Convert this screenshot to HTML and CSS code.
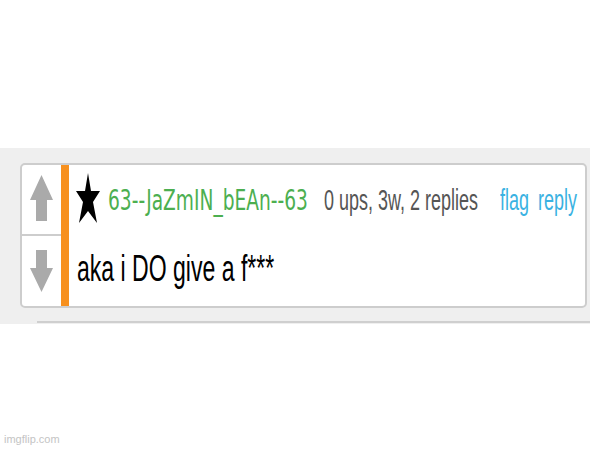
FILE: index.html
```html
<!doctype html>
<html>
<head>
<meta charset="utf-8">
<title>comment</title>
<link rel="stylesheet" href="styles.css">
</head>
<body>
<div class="band">
	<div class="comment">
		<div class="votes">
			<div class="vote vote-up">
				<svg width="23" height="46" viewBox="0 0 23 46"><polygon points="11.5,0 23,25 17,25 17,46 6,46 6,25 0,25" fill="#aaa"/></svg>
			</div>
			<div class="vote vote-down">
				<svg width="23" height="42" viewBox="0 0 23 42"><polygon points="6,0 17,0 17,18 23,18 11.5,42 0,18 6,18" fill="#aaa"/></svg>
			</div>
		</div>
		<div class="bar"></div>
		<div class="main">
			<div class="meta">
				<div class="star">
					<svg width="24" height="50" viewBox="0 0 24 50"><polygon points="12,0 15,18 24,18 17,29 21,50 12,38 3,50 7,29 0,18 9,18" fill="#000"/></svg>
				</div>
				<div class="slot slot-name"><span class="txt name">63--JaZmIN_bEAn--63</span></div>
				<div class="slot slot-stats"><span class="txt stats">0 ups, 3w, 2 replies</span></div>
				<div class="slot slot-flag"><span class="txt link">flag</span></div>
				<div class="slot"><span class="txt link">reply</span></div>
			</div>
			<div class="text">
				<span class="txt body">aka i DO give a f***</span>
			</div>
		</div>
	</div>
	<div class="next"></div>
</div>
<div class="mark">imgflip.com</div>
</body>
</html>
```

FILE: styles.css
```css
body{
	margin: 0;
	background: #fff;
	font-family: "Liberation Sans", Arial, sans-serif;
}

.band{
	margin-top: 148px;
	width: 590px;
	height: 176px;
	box-sizing: border-box;
	padding: 15px 0 0 20px;
	background: #efefef;
	display: flex;
	flex-direction: column;
}

.comment{
	width: 567px;
	height: 145px;
	box-sizing: border-box;
	border: 2px solid #cdcdcd;
	border-radius: 5px;
	background: #fff;
	display: flex;
}

.votes{
	width: 39px;
	flex-shrink: 0;
	display: flex;
	flex-direction: column;
}

.vote{
	display: flex;
	justify-content: center;
}

.vote-up{
	height: 71px;
	padding-top: 10px;
	box-sizing: border-box;
	border-bottom: 2px solid #cdcdcd;
}

.vote-down{
	flex: 1;
	padding-top: 14px;
	box-sizing: border-box;
}

.bar{
	width: 8px;
	flex-shrink: 0;
	background: #f7901e;
}

.main{
	flex: 1;
	min-width: 0;
	display: flex;
	flex-direction: column;
}

.meta{
	height: 71px;
	display: flex;
	align-items: flex-start;
}

.star{
	margin: 8px 0 0 7px;
	width: 32px;
	flex-shrink: 0;
}

.slot{
	white-space: nowrap;
	flex-shrink: 0;
}

.slot-name{
	width: 216px;
	padding-top: 22px;
}

.slot-stats{
	width: 176px;
	padding-top: 21px;
}

.slot-flag{
	width: 38px;
	padding-top: 21px;
}

.slot:last-child{
	padding-top: 21px;
}

.txt{
	display: inline-block;
	transform: scaleX(0.64);
	transform-origin: 0 50%;
	line-height: 1;
}

.name{
	font-family: "DejaVu Sans", sans-serif;
	font-size: 28px;
	color: #4caf50;
	transform: scaleX(0.665);
}

.stats{
	font-size: 29px;
	color: #555;
	transform: scaleX(0.62);
}

.link{
	font-size: 29px;
	color: #3ab2e2;
	transform: scaleX(0.62);
}

.text{
	padding: 15px 0 0 8px;
}

.body{
	font-size: 36px;
	color: #000;
}

.next{
	margin: 13px 0 0 17px;
	width: 553px;
	height: 2px;
	background: #cfcfcf;
}

.mark{
	position: absolute;
	left: 4px;
	bottom: 5px;
	font-size: 11px;
	color: #c4c4c4;
}
```
